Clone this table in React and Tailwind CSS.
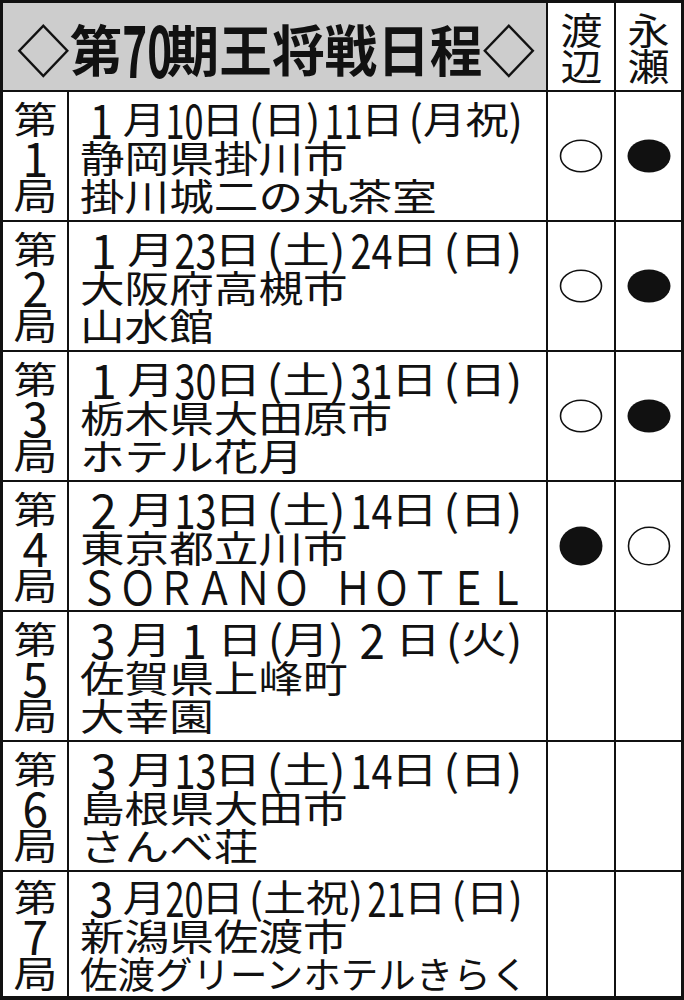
import { useLayoutEffect, useRef, useState } from "react";

const JP = "font-['Noto_Sans_CJK_JP',sans-serif]";
const PITCH = 44.6;

const rows = [
  ["1", "１月10日（日）11日（月祝）", "静岡県掛川市", "掛川城二の丸茶室", "o", "b"],
  ["2", "１月23日（土）24日（日）", "大阪府高槻市", "山水館", "o", "b"],
  ["3", "１月30日（土）31日（日）", "栃木県大田原市", "ホテル花月", "o", "b"],
  ["4", "２月13日（土）14日（日）", "東京都立川市", ["ＳＯＲＡＮＯ", "ＨＯＴＥＬ"], "b", "o"],
  ["5", "３月１日（月）２日（火）", "佐賀県上峰町", "大幸園"],
  ["6", "３月13日（土）14日（日）", "島根県大田市", "さんべ荘"],
  ["7", "３月20日（土祝）21日（日）", "新潟県佐渡市", "佐渡グリーンホテルきらく"],
];

// squeeze or stretch a line of text to the width it has in the print
function Fit({ w, center, className = "", children }) {
  const ref = useRef(null);
  const [s, setS] = useState(1);
  useLayoutEffect(() => {
    const fit = () => {
      if (ref.current) setS(w / ref.current.offsetWidth);
    };
    fit();
    document.fonts?.ready.then(fit);
  }, [w]);
  return (
    <span
      ref={ref}
      className={`inline-block whitespace-nowrap ${center ? "origin-center" : "origin-left"} ${className}`}
      style={{ transform: `scaleX(${s})` }}
    >
      {children}
    </span>
  );
}

// newspaper digits: tall and narrow
function Num({ children, wide, big }) {
  const n = children.length;
  if (wide)
    return (
      <span className="inline-block w-[1em] text-center">
        <span className={`inline-block origin-center scale-y-[1.3] ${big ? "scale-x-[1.25]" : "scale-x-[1]"}`}>
          {children}
        </span>
      </span>
    );
  return (
    <span className={`inline-block ${n > 1 ? "w-[0.84em]" : "w-[0.42em]"}`}>
      <span className="inline-block origin-left scale-x-[0.8] scale-y-[1.3]">{children}</span>
    </span>
  );
}

function DateLine({ text }) {
  const parts = text.split(/(\d+|[０-９]|（|）)/).filter(Boolean);
  return parts.map((p, i) => {
    if (/^\d+$/.test(p)) return <Num key={i}>{p}</Num>;
    if (/^[０-９]$/.test(p))
      return (
        <Num key={i} wide>
          {String.fromCharCode(p.charCodeAt(0) - 0xfee0)}
        </Num>
      );
    if (p === "（")
      return (
        <span key={i} className="inline-block w-[0.45em] text-right">
          <span className="inline-block scale-y-[1.12]">(</span>
        </span>
      );
    if (p === "）")
      return (
        <span key={i} className="inline-block w-[0.45em] text-left">
          <span className="inline-block scale-y-[1.12]">)</span>
        </span>
      );
    return <span key={i}>{p}</span>;
  });
}

function Mark({ kind, round }) {
  const ry = round ? 19.5 : 16.5;
  return (
    <svg width="46" height="42" viewBox="0 0 46 42">
      {kind === "b" ? (
        <ellipse cx="23" cy="21" rx="21.5" ry={ry} fill="#111" />
      ) : (
        <ellipse cx="23" cy="21" rx="20.5" ry={ry - 0.8} fill="none" stroke="#111" strokeWidth="1.6" />
      )}
    </svg>
  );
}

export default function App() {
  return (
    <div className={`w-[684px] h-[1000px] bg-[#111] border-t-[3px] border-l-[3px] border-r-[3px] border-b-[4px] border-[#111] grid grid-cols-[64px_477px_66px_65px] grid-rows-[87px_repeat(6,128px)_124px] gap-[2px] text-[#111] ${JP}`}>
      <div className="col-span-2 bg-[#cdcdcd] flex items-center pl-[14px]">
        <div className="h-[60px] leading-[60px] text-[55px] font-bold">
          <Fit w={518}>
            ◇第<Num>70</Num>期王将戦日程◇
          </Fit>
        </div>
      </div>
      {["渡辺", "永瀬"].map((name) => (
        <div key={name} className="bg-white flex flex-col items-center justify-center text-[37px]">
          {name.split("").map((c) => (
            <div key={c} className="h-[36px] leading-[36px]">
              <Fit w={42} center>
                {c}
              </Fit>
            </div>
          ))}
        </div>
      ))}

      {rows.map(([no, date, city, venue, wa, na], i) => (
        <Row key={no} no={no} date={date} city={city} venue={venue} wa={wa} na={na} round={i === 3} />
      ))}
    </div>
  );
}

function Row({ no, date, city, venue, wa, na, round }) {
  const latin = Array.isArray(venue);
  const venueW = !latin && venue.length > 10 ? 448 : venue.length * PITCH;
  return (
    <>
      <div className="bg-white flex flex-col items-center justify-center text-[37px]">
        <div className="h-[38px] leading-[38px]">
          <Fit w={44} center>
            第
          </Fit>
        </div>
        <div className="h-[38px] leading-[38px]">
          <Num wide big>
            {no}
          </Num>
        </div>
        <div className="h-[38px] leading-[38px]">
          <Fit w={44} center>
            局
          </Fit>
        </div>
      </div>
      <div className="bg-white flex flex-col justify-center pl-[11px] text-[37px]">
        <div className="h-[39px] leading-[38px]">
          <Fit w={448}>
            <DateLine text={date} />
          </Fit>
        </div>
        <div className="h-[38px] leading-[38px]">
          <Fit w={city.length * PITCH}>{city}</Fit>
        </div>
        <div className="h-[38px] leading-[38px]">
          {latin ? (
            <Fit w={446} className="scale-y-[1.25]">
              {venue[0]}
              <span className="inline-block w-[0.6em]" />
              {venue[1]}
            </Fit>
          ) : (
            <Fit w={venueW}>{venue}</Fit>
          )}
        </div>
      </div>
      <div className="bg-white flex items-center justify-center">
        {wa && <Mark kind={wa} round={round} />}
      </div>
      <div className="bg-white flex items-center justify-center">
        {na && <Mark kind={na} round={round} />}
      </div>
    </>
  );
}
